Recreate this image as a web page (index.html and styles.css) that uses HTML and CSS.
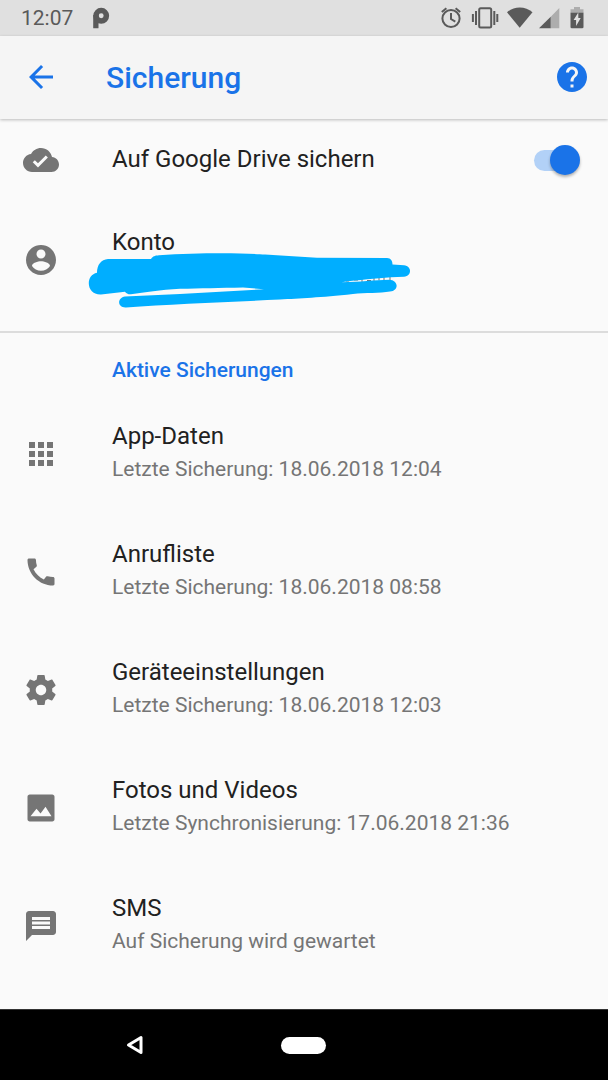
FILE: index.html
```html
<!DOCTYPE html>
<html lang="de">
<head>
    <meta charset="UTF-8">
    <meta name="viewport" content="width=device-width, initial-scale=1.0">
    <title>Sicherung</title>
    <link rel="stylesheet" href="styles.css">
</head>
<body>

    <!-- Status bar -->
    <div class="status-bar">
        <span class="clock">12:07</span>
        <svg class="logo" width="18" height="22" viewBox="0 0 18 22" aria-hidden="true">
            <circle class="ring" cx="9.200" cy="8.800" r="5.200"/>
            <rect x="1.200" y="8" width="5.300" height="13.200" rx="0.500"/>
        </svg>
        <div class="status-icons">
            <svg width="32" height="36" viewBox="435 0 32 36" aria-hidden="true">
                <circle class="line" cx="451" cy="18.500" r="8.600"/>
                <path class="line" d="M451 13v6l4.300 2.600M441.800 12l4.600-3.800M460.200 12l-4.600-3.800"/>
            </svg>
            <svg width="36" height="36" viewBox="467 0 36 36" aria-hidden="true">
                <rect class="line" x="479.200" y="8.200" width="12" height="19.200" rx="1.500"/>
                <path class="line" d="M476 11v14M472.900 14v8M494.300 11v14M497.300 14v8"/>
            </svg>
            <svg width="33" height="36" viewBox="503 0 33 36" aria-hidden="true">
                <path d="M519.700 27.800L507 12.300c7-6.500 18.500-6.500 25.500 0z"/>
            </svg>
            <svg width="27" height="36" viewBox="536 0 27 36" aria-hidden="true">
                <path class="faint" d="M559.300 8v20.300H550.500V17z"/>
                <path d="M550.700 16.800v11.500H539z"/>
            </svg>
            <svg width="28" height="36" viewBox="563 0 28 36" aria-hidden="true">
                <path class="faint" d="M574 7h6v2.300h3.500V13h-13V9.300h3.500z"/>
                <path d="M570.500 12.700h13V27a1.300 1.300 0 0 1-1.300 1.300h-10.400a1.300 1.300 0 0 1-1.300-1.300z"/>
                <path class="bolt" d="M578.300 12.500v5.500h2.400l-4.600 8v-6h-2.500z"/>
            </svg>
        </div>
    </div>

    <!-- App bar -->
    <header class="app-bar">
        <button class="icon-button" type="button" aria-label="Zurück">
            <svg class="icon" viewBox="0 0 24 24"><path d="M20 11H7.830l5.590-5.590L12 4l-8 8 8 8 1.410-1.410L7.830 13H20v-2z"/></svg>
        </button>
        <h1>Sicherung</h1>
        <button class="icon-button" type="button" aria-label="Hilfe">
            <svg class="icon" viewBox="0 0 24 24"><path d="M12 2C6.480 2 2 6.480 2 12s4.480 10 10 10 10-4.480 10-10S17.520 2 12 2zm1 17h-2v-2h2v2zm2.070-7.750l-.9.920C13.450 12.900 13 13.500 13 15h-2v-.5c0-1.100.45-2.100 1.170-2.830l1.240-1.260c.37-.36.590-.86.590-1.410 0-1.100-.9-2-2-2s-2 .9-2 2H8c0-2.210 1.790-4 4-4s4 1.790 4 4c0 .88-.36 1.680-.93 2.250z"/></svg>
        </button>
    </header>

    <main>
        <section class="settings">
            <div class="row row-single">
                <svg class="icon" viewBox="0 0 24 24" aria-hidden="true"><path d="M19.350 10.040C18.670 6.590 15.640 4 12 4 9.110 4 6.600 5.640 5.350 8.040 2.340 8.360 0 10.910 0 14c0 3.310 2.690 6 6 6h13c2.760 0 5-2.240 5-5 0-2.640-2.050-4.780-4.650-4.960zM10 17l-3.500-3.500 1.410-1.410L10 14.170l5.180-5.170 1.410 1.410L10 17z"/></svg>
                <label class="title" for="drive-backup">Auf Google Drive sichern</label>
                <span class="toggle">
                    <input class="switch" type="checkbox" role="switch" id="drive-backup" checked>
                </span>
            </div>
            <div class="row">
                <svg class="icon" viewBox="0 0 24 24" aria-hidden="true"><path d="M12 2C6.480 2 2 6.480 2 12s4.480 10 10 10 10-4.480 10-10S17.520 2 12 2zm0 3c1.660 0 3 1.340 3 3s-1.340 3-3 3-3-1.340-3-3 1.340-3 3-3zm0 14.200c-2.500 0-4.710-1.280-6-3.220.03-1.990 4-3.080 6-3.080 1.990 0 5.970 1.090 6 3.080-1.290 1.940-3.500 3.220-6 3.220z"/></svg>
                <div class="text">
                    <span class="title">Konto</span>
                    <span class="summary redacted">
                        <svg class="scribble" width="340" height="64" viewBox="80 248 340 64" aria-hidden="true">
                            <path class="hidden-text" d="M346 281h3M354 280h4M362 279v3M367 280.500h4M374 278v3M379 277.500v3M384 277v4M390 276v5"/>
                            <path d="M108 259H151C153 256 155 255.500 159 255.200C200 252.500 245 253 265 254.500L317 257.700L387 258C391 258 392.500 261 392.500 264.500L404 265.200C412 266 412 276 404 276.800L391 277.300C375 279 360 279.500 341.500 282.300C360 281.800 375 280 389 279.700C399 280 399 291 390 291.500C380 293.500 365 292.500 353 294C320 297.500 300 298.500 280 299.500C230 302 170 304 126 307.500C117 308 117 297.500 125 296.400L180 294L264 289.300L243 287.400C220 288 200 288 180 288.800C160 290 145 292.500 131 294.300C128 294.500 126 293 125 291.700L101 294.500C86 295 85 275 97 272.700C97 265 101 259.500 108 259z"/>
                        </svg>
                    </span>
                </div>
            </div>
        </section>

        <section>
            <h2>Aktive Sicherungen</h2>
            <div class="row">
                <svg class="icon" viewBox="0 0 24 24" aria-hidden="true"><path d="M4 8h4V4H4v4zm6 12h4v-4h-4v4zm-6 0h4v-4H4v4zm0-6h4v-4H4v4zm6 0h4v-4h-4v4zm6-10v4h4V4h-4zm-6 4h4V4h-4v4zm6 6h4v-4h-4v4zm0 6h4v-4h-4v4z"/></svg>
                <div class="text">
                    <span class="title">App-Daten</span>
                    <span class="summary">Letzte Sicherung: 18.06.2018 12:04</span>
                </div>
            </div>
            <div class="row">
                <svg class="icon" viewBox="0 0 24 24" aria-hidden="true"><path d="M20.010 15.380c-1.230 0-2.420-.2-3.530-.56-.35-.12-.74-.03-1.010.24l-1.570 1.970c-2.830-1.350-5.480-3.900-6.890-6.830l1.950-1.660c.27-.28.350-.67.240-1.020-.37-1.110-.56-2.300-.56-3.530 0-.54-.45-.99-.99-.99H4.190C3.650 3 3 3.240 3 3.990 3 13.280 10.730 21 20.010 21c.71 0 .99-.63.990-1.180v-3.450c0-.54-.45-.99-.99-.99z"/></svg>
                <div class="text">
                    <span class="title">Anrufliste</span>
                    <span class="summary">Letzte Sicherung: 18.06.2018 08:58</span>
                </div>
            </div>
            <div class="row">
                <svg class="icon" viewBox="0 0 24 24" aria-hidden="true"><path d="M19.430 12.980c.04-.32.070-.64.070-.98s-.03-.66-.07-.98l2.110-1.650c.19-.15.240-.42.120-.64l-2-3.460c-.12-.22-.39-.3-.61-.22l-2.490 1c-.52-.4-1.080-.73-1.690-.98l-.38-2.650C14.460 2.180 14.250 2 14 2h-4c-.25 0-.46.180-.49.420l-.38 2.650c-.61.250-1.170.590-1.690.98l-2.490-1c-.23-.09-.49 0-.61.220l-2 3.460c-.13.220-.07.490.12.640l2.110 1.650c-.04.320-.07.650-.07.980s.030.660.07.980l-2.110 1.650c-.19.150-.24.420-.12.640l2 3.460c.12.220.39.300.61.220l2.490-1c.52.400 1.080.730 1.690.980l.38 2.650c.03.240.24.420.49.420h4c.25 0 .46-.18.49-.42l.38-2.650c.61-.25 1.170-.59 1.690-.98l2.490 1c.23.090.49 0 .61-.22l2-3.460c.12-.22.070-.49-.12-.64l-2.110-1.650zM12 15.500c-1.930 0-3.500-1.570-3.500-3.500s1.570-3.500 3.500-3.500 3.500 1.570 3.500 3.500-1.570 3.500-3.500 3.500z"/></svg>
                <div class="text">
                    <span class="title">Geräteeinstellungen</span>
                    <span class="summary">Letzte Sicherung: 18.06.2018 12:03</span>
                </div>
            </div>
            <div class="row">
                <svg class="icon" viewBox="0 0 24 24" aria-hidden="true"><path d="M19.500 3h-15C3.670 3 3 3.670 3 4.500v15c0 .83.670 1.500 1.500 1.500h15c.83 0 1.500-.67 1.500-1.500v-15c0-.83-.67-1.500-1.500-1.500zM5 17.500l4-5 2.700 3.200 3.300-4.500 4 6.300z"/></svg>
                <div class="text">
                    <span class="title">Fotos und Videos</span>
                    <span class="summary">Letzte Synchronisierung: 17.06.2018 21:36</span>
                </div>
            </div>
            <div class="row">
                <svg class="icon" viewBox="0 0 24 24" aria-hidden="true"><path d="M20 2H4c-1.100 0-1.990.9-1.990 2L2 22l4-4h14c1.100 0 2-.9 2-2V4c0-1.100-.9-2-2-2zM6 6h12v2H6zm0 3h12v2H6zm0 3h12v2H6z"/></svg>
                <div class="text">
                    <span class="title">SMS</span>
                    <span class="summary">Auf Sicherung wird gewartet</span>
                </div>
            </div>
        </section>
    </main>

    <!-- System navigation -->
    <nav class="nav-bar">
        <button type="button" aria-label="Zurück">
            <svg width="18" height="20" viewBox="0 0 18 20"><path class="back" d="M15 2.500v15L2.500 10z"/></svg>
        </button>
        <button type="button" aria-label="Startbildschirm">
            <span class="home-pill"></span>
        </button>
    </nav>

</body>
</html>
```
FILE: styles.css
```css
* {
    box-sizing: border-box;
}
body {
    font-family: Roboto, sans-serif;
    margin: 0;
    min-height: 100vh;
    display: flex;
    flex-direction: column;
    background: #fafafa;
    color: #212121;
}
button {
    display: flex;
    align-items: center;
    justify-content: center;
    padding: 0;
    background: none;
    border: none;
    cursor: pointer;
}
.status-bar {
    display: flex;
    align-items: center;
    height: 36px;
    padding: 0 17px 0 21px;
    background: #e0e0e0;
    color: #5a5a5a;
    fill: #5a5a5a;
}
.clock {
    font-size: 21px;
}
.logo {
    margin-left: 19px;
}
.logo .ring {
    fill: none;
    stroke: #5a5a5a;
    stroke-width: 5.5;
}
.status-icons {
    display: flex;
    margin-left: auto;
}
.status-icons .line {
    fill: none;
    stroke: #5a5a5a;
    stroke-width: 2;
}
.status-icons .faint {
    fill: #adadad;
}
.status-icons .bolt {
    fill: #e0e0e0;
}
.app-bar {
    display: flex;
    align-items: center;
    height: 83px;
    padding: 0 18px 0 23px;
    background: #f5f5f5;
    color: #1a73e8;
    box-shadow: 0 1px 3px rgba(0, 0, 0, 0.25);
}
.app-bar h1 {
    flex: 1;
    margin: 0 0 0 47px;
    font-size: 30px;
    font-weight: 500;
    line-height: 36px;
}
.icon-button {
    margin-bottom: 2px;
    color: inherit;
}
.icon {
    flex: none;
    width: 36px;
    height: 36px;
    fill: #757575;
}
.icon-button .icon {
    fill: currentColor;
}
main {
    flex: 1;
}
.settings {
    padding-bottom: 12px;
    border-bottom: 2px solid #dcdcdc;
}
.row {
    display: flex;
    align-items: center;
    gap: 53px;
    height: 118px;
    padding: 0 28px 0 23px;
}
.row-single {
    height: 82px;
}
.row-single .title {
    flex: 1;
    padding-bottom: 2px;
}
.text {
    display: flex;
    flex-direction: column;
    padding-bottom: 4px;
}
.title {
    font-size: 24px;
    line-height: 34px;
}
.summary {
    min-height: 32px;
    font-size: 21px;
    line-height: 32px;
    color: #757575;
}
.redacted {
    position: relative;
}
.scribble {
    position: absolute;
    top: -11px;
    left: -32px;
    fill: #00aeff;
}
.hidden-text {
    stroke: #757575;
    stroke-width: 1;
}
h2 {
    margin: 0;
    padding: 20px 28px 8px 112px;
    font-size: 21px;
    font-weight: 500;
    line-height: 34px;
    color: #1a73e8;
}
.toggle {
    display: flex;
    align-items: center;
    position: relative;
}
/* track */
.toggle::before {
    content: "";
    position: absolute;
    left: 0;
    width: 40px;
    height: 21px;
    border-radius: 11px;
    background: #b2d1f7;
}
.switch {
    appearance: none;
    position: relative;
    display: flex;
    justify-content: flex-end;
    width: 46px;
    height: 30px;
    margin: 0;
    cursor: pointer;
}
.switch:not(:checked) {
    justify-content: flex-start;
}
.switch::before {
    content: "";
    width: 30px;
    height: 30px;
    border-radius: 50%;
    background: #1a73e8;
    box-shadow: 0 2px 3px rgba(0, 0, 0, 0.3);
}
.nav-bar {
    display: grid;
    grid-template-columns: repeat(3, 1fr);
    height: 71px;
    padding: 0 50px;
    border-top: 1px solid #333;
    background: #000;
}
.back {
    fill: none;
    stroke: #fff;
    stroke-width: 3;
    stroke-linejoin: round;
}
.home-pill {
    width: 45px;
    height: 17px;
    border-radius: 9px;
    background: #fff;
}
```
